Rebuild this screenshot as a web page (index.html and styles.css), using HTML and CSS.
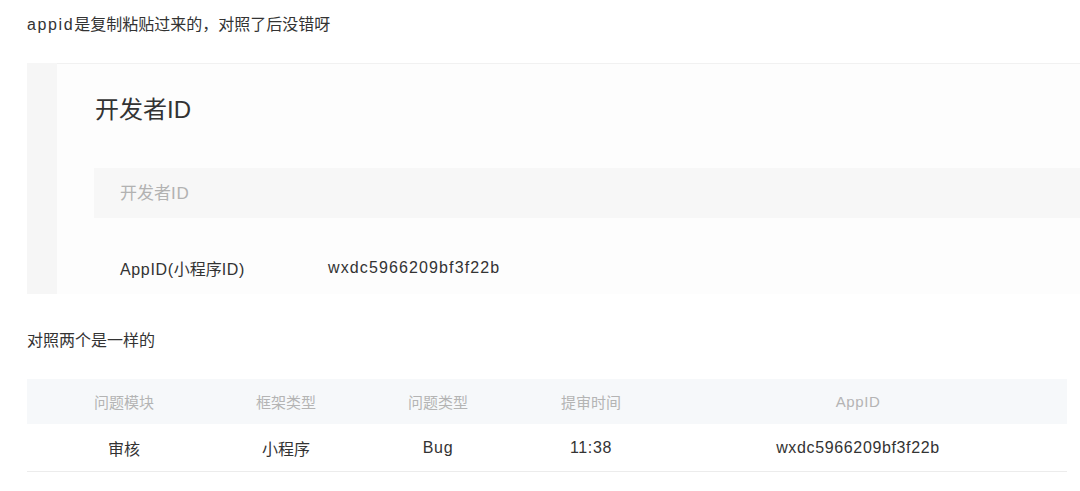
FILE: index.html
```html
<!DOCTYPE html>
<html lang="zh-CN">
<head>
<meta charset="utf-8">
<title>appid</title>
<link rel="stylesheet" href="styles.css">
</head>
<body>
  <p class="msg msg-top"><span class="lat">appid</span>是复制粘贴过来的，对照了后没错呀</p>

  <div class="shot">
    <div class="shot-strip"></div>
    <div class="shot-card">
      <h2 class="shot-title">开发者ID</h2>
      <div class="shot-field">开发者<span class="lat">ID</span></div>
      <div class="shot-row">
        <span class="shot-label"><span class="lat">AppID(</span>小程序<span class="lat">ID)</span></span>
        <span class="shot-value lat">wxdc5966209bf3f22b</span>
      </div>
    </div>
  </div>

  <p class="msg msg-mid">对照两个是一样的</p>

  <div class="table">
    <div class="tr th">
      <div class="cell">问题模块</div>
      <div class="cell">框架类型</div>
      <div class="cell">问题类型</div>
      <div class="cell">提审时间</div>
      <div class="cell lat">AppID</div>
      <div class="cell"></div>
    </div>
    <div class="tr td">
      <div class="cell">审核</div>
      <div class="cell">小程序</div>
      <div class="cell lat">Bug</div>
      <div class="cell lat">11:38</div>
      <div class="cell lat">wxdc5966209bf3f22b</div>
      <div class="cell"></div>
    </div>
  </div>
</body>
</html>
```

FILE: styles.css
```css
html, body {
  margin: 0;
  padding: 0;
  background: #ffffff;
}

body {
  font-family: "Liberation Sans", "Noto Sans CJK SC", sans-serif;
  color: #333333;
  width: 1080px;
  overflow: hidden;
}

.lat {
  letter-spacing: 0.04em;
}

.msg {
  margin: 0;
  padding-left: 27px;
  font-size: 16px;
  line-height: 24px;
  color: #333333;
}

.msg-top {
  padding-top: 13px;
}

.msg-top .lat {
  letter-spacing: 0.1em;
}

.shot {
  display: flex;
  margin: 26px 0 0 27px;
  height: 231px;
}

.shot-strip {
  width: 30px;
  background: #f6f6f6;
}

.shot-card {
  flex: 1;
  background: #fdfdfd;
  border-top: 1px solid #f1f1f1;
  padding-left: 37px;
  display: flex;
  flex-direction: column;
}

.shot-title {
  margin: 30px 0 0 1px;
  font-size: 24px;
  line-height: 32px;
  font-weight: normal;
  color: #333333;
}

.shot-field {
  margin-top: 42px;
  height: 48px;
  padding-top: 2px;
  line-height: 48px;
  background: #f7f7f7;
  padding-left: 26px;
  font-size: 17px;
  color: #b2b2b2;
}

.shot-row {
  display: flex;
  align-items: center;
  height: 50px;
  margin-top: 25px;
  padding-left: 26px;
  font-size: 16px;
  color: #333333;
}

.shot-label {
  width: 208px;
}

.shot-value {
  letter-spacing: 0.07em;
}

.msg-mid {
  margin-top: 35px;
}

.table {
  margin: 26px 0 0 27px;
  width: 1040px;
}

.tr {
  display: grid;
  grid-template-columns: 194px 130px 174px 132px 402px 1fr;
  align-items: center;
}

.th {
  height: 45px;
  background: #f6f8fa;
  color: #b4b4b4;
}

.td {
  height: 47px;
  border-bottom: 1px solid #ececec;
  color: #333333;
}

.cell {
  text-align: center;
  font-size: 15px;
}

.td .cell {
  font-size: 16px;
}
```
